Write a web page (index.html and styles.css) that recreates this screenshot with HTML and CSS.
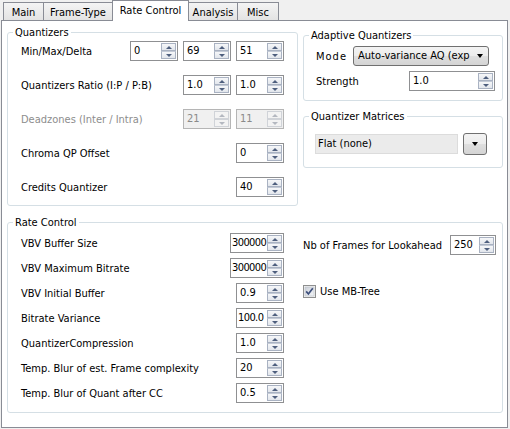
FILE: index.html
```html
<!DOCTYPE html>
<html>
<head>
<meta charset="utf-8">
<link rel="stylesheet" href="styles.css">
</head>
<body>
<div class="window">
  <div class="tabbar">
    <div class="tab tab-main">Main</div>
    <div class="tab tab-frame">Frame-Type</div>
    <div class="tab tab-rate active">Rate Control</div>
    <div class="tab tab-analysis">Analysis</div>
    <div class="tab tab-misc">Misc</div>
  </div>
  <div class="pane">
    <div class="top-row">
      <div class="group quantizers">
        <div class="group-title">Quantizers</div>
        <div class="group-body q-body">
          <div class="row">
            <span class="label">Min/Max/Delta</span>
            <div class="spins">
              <div class="spin w48"><span class="val">0</span><span class="btns"><span class="btn up"></span><span class="btn dn"></span></span></div>
              <div class="spin w48"><span class="val">69</span><span class="btns"><span class="btn up"></span><span class="btn dn"></span></span></div>
              <div class="spin w48"><span class="val">51</span><span class="btns"><span class="btn up"></span><span class="btn dn"></span></span></div>
            </div>
          </div>
          <div class="row">
            <span class="label">Quantizers Ratio (I:P / P:B)</span>
            <div class="spins">
              <div class="spin w48"><span class="val">1.0</span><span class="btns"><span class="btn up"></span><span class="btn dn"></span></span></div>
              <div class="spin w48"><span class="val">1.0</span><span class="btns"><span class="btn up"></span><span class="btn dn"></span></span></div>
            </div>
          </div>
          <div class="row disabled">
            <span class="label">Deadzones (Inter / Intra)</span>
            <div class="spins">
              <div class="spin w48"><span class="val">21</span><span class="btns"><span class="btn up"></span><span class="btn dn"></span></span></div>
              <div class="spin w48"><span class="val">11</span><span class="btns"><span class="btn up"></span><span class="btn dn"></span></span></div>
            </div>
          </div>
          <div class="row">
            <span class="label">Chroma QP Offset</span>
            <div class="spin w48"><span class="val">0</span><span class="btns"><span class="btn up"></span><span class="btn dn"></span></span></div>
          </div>
          <div class="row">
            <span class="label">Credits Quantizer</span>
            <div class="spin w48"><span class="val">40</span><span class="btns"><span class="btn up"></span><span class="btn dn"></span></span></div>
          </div>
        </div>
      </div>
      <div class="right-col">
        <div class="group aq">
          <div class="group-title">Adaptive Quantizers</div>
          <div class="group-body aq-body">
            <div class="row">
              <span class="label mode">Mode</span>
              <div class="combo"><span class="combo-text">Auto-variance AQ (exp</span><span class="arrow"></span></div>
            </div>
            <div class="row">
              <span class="label">Strength</span>
              <div class="spin w86 strength"><span class="val">1.0</span><span class="btns"><span class="btn up"></span><span class="btn dn"></span></span></div>
            </div>
          </div>
        </div>
        <div class="group qm">
          <div class="group-title">Quantizer Matrices</div>
          <div class="group-body qm-body">
            <div class="flat-combo">Flat (none)</div>
            <div class="drop-btn"><span class="arrow"></span></div>
          </div>
        </div>
      </div>
    </div>
    <div class="group rc">
      <div class="group-title">Rate Control</div>
      <div class="group-body rc-body">
        <div class="rc-left">
          <div class="row"><span class="label">VBV Buffer Size</span><div class="spin w54"><span class="val tight">300000</span><span class="btns"><span class="btn up"></span><span class="btn dn"></span></span></div></div>
          <div class="row"><span class="label">VBV Maximum Bitrate</span><div class="spin w54"><span class="val tight">300000</span><span class="btns"><span class="btn up"></span><span class="btn dn"></span></span></div></div>
          <div class="row"><span class="label">VBV Initial Buffer</span><div class="spin w48"><span class="val">0.9</span><span class="btns"><span class="btn up"></span><span class="btn dn"></span></span></div></div>
          <div class="row"><span class="label">Bitrate Variance</span><div class="spin w48"><span class="val tight">100.0</span><span class="btns"><span class="btn up"></span><span class="btn dn"></span></span></div></div>
          <div class="row"><span class="label">QuantizerCompression</span><div class="spin w48"><span class="val">1.0</span><span class="btns"><span class="btn up"></span><span class="btn dn"></span></span></div></div>
          <div class="row"><span class="label">Temp. Blur of est. Frame complexity</span><div class="spin w48"><span class="val">20</span><span class="btns"><span class="btn up"></span><span class="btn dn"></span></span></div></div>
          <div class="row"><span class="label">Temp. Blur of Quant after CC</span><div class="spin w48"><span class="val">0.5</span><span class="btns"><span class="btn up"></span><span class="btn dn"></span></span></div></div>
        </div>
        <div class="rc-right">
          <div class="row"><span class="label">Nb of Frames for Lookahead</span><div class="spin w46"><span class="val">250</span><span class="btns"><span class="btn up"></span><span class="btn dn"></span></span></div></div>
          <div class="row check-row">
            <svg class="checkbox" width="13" height="13" viewBox="0 0 13 13">
              <defs>
                <linearGradient id="cbg" x1="0" y1="0" x2="1" y2="1">
                  <stop offset="0" stop-color="#cbd0d8"/>
                  <stop offset="1" stop-color="#f4f6f9"/>
                </linearGradient>
              </defs>
              <rect x="0.5" y="0.5" width="12" height="12" fill="#f4f4f4" stroke="#8e8f8f"/>
              <rect x="2" y="2" width="9" height="9" fill="url(#cbg)" stroke="#b9bec7" stroke-width="0.6"/>
              <path d="M3.2 6.4 L5.4 9 L9.8 3.2" fill="none" stroke="#3d4f7c" stroke-width="1.7"/>
            </svg>
            <span class="label">Use MB-Tree</span>
          </div>
        </div>
      </div>
    </div>
  </div>
</div>
</body>
</html>
```
FILE: styles.css
```css
* { box-sizing: border-box; }

body {
  margin: 0;
  background: #f0f0f0;
  font-family: "DejaVu Sans Condensed", "DejaVu Sans", sans-serif;
  font-size: 11px;
  color: #000;
}

.window {
  width: 510px;
  height: 429px;
  background: #f0f0f0;
  overflow: hidden;
}

/* Tabs */
.tabbar {
  display: flex;
  height: 20px;
  padding-left: 3px;
}

.tab {
  margin-top: 2px;
  margin-left: -1px;
  height: 18px;
  border: 1px solid #898c95;
  border-bottom: none;
  background: linear-gradient(#f4f4f4, #e3e3e3);
  display: flex;
  align-items: center;
  justify-content: center;
  padding-top: 1px;
  white-space: nowrap;
}

.tab:first-child { margin-left: 0; }

.tab.active {
  margin-top: 0;
  height: 21px;
  background: #fff;
  position: relative;
  z-index: 1;
  padding-top: 0;
  padding-bottom: 2px;
}

.tab-main { width: 41px; }
.tab-frame { width: 70px; }
.tab-rate { width: 77px; }
.tab-analysis { width: 50px; }
.tab-misc { width: 42px; }

/* Pane */
.pane {
  margin-left: 1px;
  width: 507px;
  height: 408px;
  border: 1px solid #898c95;
  background: #fff;
  padding: 11px 4px 0 5px;
}

.top-row {
  display: flex;
  gap: 5px;
  align-items: flex-start;
}

.group {
  border: 1px solid #d5dfe5;
  border-radius: 3px;
}

.group-title {
  display: table;
  background: #fff;
  line-height: 13px;
  padding: 0 2px;
  margin: -7px 0 0 5px;
}

.row {
  display: flex;
  align-items: center;
  height: 20px;
}

.label {
  flex: 1;
  white-space: nowrap;
}

.spins {
  display: flex;
  gap: 5px;
}

/* Quantizers */
.quantizers { width: 291px; }

.q-body {
  padding: 2px 13px 8px 13px;
  display: flex;
  flex-direction: column;
  gap: 14px;
}

.disabled .label { color: #8d8d8d; }

/* Spin boxes */
.spin {
  height: 20px;
  border: 1px solid #8f9092;
  background: #fff;
  display: flex;
  align-items: center;
  padding: 1px;
}

.w46 { width: 46px; }
.w48 { width: 48px; }
.w54 { width: 54px; }
.w86 { width: 86px; }

.val {
  flex: 1;
  min-width: 0;
  padding-left: 2px;
  overflow: hidden;
  white-space: nowrap;
  line-height: 14px;
  padding-bottom: 1px;
}

.val.tight {
  padding-left: 0;
  letter-spacing: -0.6px;
}

.btns {
  flex: none;
  width: 15px;
  height: 16px;
  display: flex;
  flex-direction: column;
}

.btn {
  flex: 1;
  border: 1px solid #a9b2c2;
  background: linear-gradient(#f6f7f9, #e2e6ec);
  display: flex;
  align-items: center;
  justify-content: center;
}

.btn.dn { border-top-color: #c3cad6; }

.btn.up::before {
  content: "";
  border-left: 3px solid transparent;
  border-right: 3px solid transparent;
  border-bottom: 3px solid #4e5f7e;
}

.btn.dn::before {
  content: "";
  border-left: 3px solid transparent;
  border-right: 3px solid transparent;
  border-top: 3px solid #4e5f7e;
}

.disabled .spin {
  background: #f0f0f0;
  border-color: #b5b5b5;
  color: #8a8a8a;
}

.disabled .btn {
  border-color: #d0d3d8;
  background: #f3f3f3;
}

.disabled .btn.up::before { border-bottom-color: #b4b8c0; }
.disabled .btn.dn::before { border-top-color: #b4b8c0; }

/* Right column */
.right-col {
  width: 200px;
  margin-top: 3px;
  display: flex;
  flex-direction: column;
  gap: 15px;
}

.aq-body {
  padding: 4px 13px 9px 12px;
  display: flex;
  flex-direction: column;
  gap: 5px;
}

.mode { letter-spacing: 1px; }

.combo {
  width: 136px;
  height: 20px;
  border: 1px solid #707070;
  border-radius: 3px;
  background: linear-gradient(#f3f3f3 0%, #ececec 50%, #dfdfdf 50%, #d4d4d4 100%);
  display: flex;
  align-items: center;
  padding: 0 5px 1px 4px;
}

.combo-text {
  flex: 1;
  white-space: nowrap;
  overflow: hidden;
}

.arrow {
  border-left: 3.5px solid transparent;
  border-right: 3.5px solid transparent;
  border-top: 4px solid #000;
  margin-left: 3px;
}

.strength { margin-right: -6px; }

.qm-body {
  padding: 10px 14px 12px 11px;
  display: flex;
  gap: 5px;
  align-items: center;
}

.flat-combo {
  width: 143px;
  height: 20px;
  background: #ebebeb;
  border: 1px solid #dcdcdc;
  display: flex;
  align-items: center;
  padding: 0 0 1px 2px;
}

.drop-btn {
  width: 24px;
  height: 22px;
  border: 1px solid #707070;
  border-radius: 3px;
  background: linear-gradient(#f3f3f3 0%, #ececec 50%, #dfdfdf 50%, #d4d4d4 100%);
  display: flex;
  align-items: center;
  justify-content: center;
}

.drop-btn .arrow { margin-left: 0; }

/* Rate control */
.rc {
  margin-top: 16px;
}

.rc-body {
  padding: 4px 6px 9px 13px;
  display: flex;
  gap: 19px;
}

.rc-left {
  width: 263px;
  display: flex;
  flex-direction: column;
  gap: 5px;
}

.rc-right {
  flex: 1;
  padding-top: 2px;
  display: flex;
  flex-direction: column;
  gap: 26px;
}

.check-row {
  gap: 4px;
}

.checkbox { flex: none; }
```
